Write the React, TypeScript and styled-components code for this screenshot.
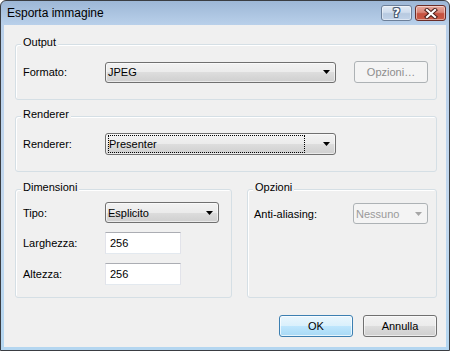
import React from 'react';
import styled, { createGlobalStyle } from 'styled-components';

const GlobalStyle = createGlobalStyle`
  html, body { margin: 0; padding: 0; background: #ffffff; }
  body {
    font-family: "Liberation Sans", Arial, sans-serif;
    font-size: 11px;
    color: #000;
  }
  * { box-sizing: border-box; }
`;

const Window = styled.div`
  width: 450px;
  height: 351px;
  border: 1px solid #3a3d42;
  border-radius: 6px 6px 0 0;
  background: linear-gradient(to bottom, #9db7d6 0px, #b9d0ea 24px, #c3d8ee 60%, #b4d6f0 100%);
  display: flex;
  flex-direction: column;
  overflow: hidden;
`;

const TitleBar = styled.div`
  height: 24px;
  flex: none;
  display: flex;
  align-items: center;
  padding: 0 3px 0 6px;
`;

const Title = styled.span`
  font-family: "Liberation Sans", Arial, sans-serif;
  font-size: 12px;
  color: #000;
`;

const CaptionButtons = styled.div`
  margin-left: auto;
  align-self: flex-start;
  margin-top: 4px;
  display: flex;
  gap: 3px;
`;

const CaptionButton = styled.div<{ $variant: 'help' | 'close' }>`
  width: 31px;
  height: 16px;
  border-radius: 3px;
  border: 1px solid ${(p) => (p.$variant === 'close' ? '#6b2d27' : '#6c7f99')};
  background: ${(p) =>
    p.$variant === 'close'
      ? 'linear-gradient(to bottom, #e6a99e 0%, #d98576 45%, #c5513f 55%, #c95a45 100%)'
      : 'linear-gradient(to bottom, #e2eaf4 0%, #cfdced 45%, #b7c9e0 55%, #c2d3e8 100%)'};
  box-shadow: inset 0 0 0 1px rgba(255, 255, 255, 0.45);
  display: flex;
  align-items: center;
  justify-content: center;
`;

const HelpGlyph = styled.span`
  font-family: "DejaVu Sans", sans-serif;
  font-weight: bold;
  font-size: 12px;
  line-height: 14px;
  color: #ffffff;
  text-shadow: 1px 0 0 #4a5b73, -1px 0 0 #4a5b73, 0 1px 0 #4a5b73, 0 -1px 0 #4a5b73,
    1px 1px 0 #4a5b73, -1px -1px 0 #4a5b73, 1px -1px 0 #4a5b73, -1px 1px 0 #4a5b73;
`;

const Client = styled.div`
  flex: 1;
  margin: 0 3px 3px;
  background: #f0f0f0;
  padding: 19px 9px 0 11px;
  display: flex;
  flex-direction: column;
`;

const GroupBox = styled.div<{ $pad: string; $height?: number; $mt?: number }>`
  position: relative;
  border: 1px solid #d5dfe5;
  border-radius: 3px;
  box-shadow: inset 1px 1px 0 #ffffff;
  padding: ${(p) => p.$pad};
  margin-top: ${(p) => p.$mt ?? 0}px;
  ${(p) => (p.$height ? `height: ${p.$height}px;` : '')}
`;

const Legend = styled.span`
  position: absolute;
  top: -9px;
  left: 5px;
  padding: 0 2px;
  line-height: 13px;
  background: #f0f0f0;
  color: #000;
`;

const Row = styled.div`
  display: flex;
  align-items: center;
`;

const Label = styled.span<{ $width: number }>`
  width: ${(p) => p.$width}px;
  flex: none;
  white-space: nowrap;
`;

const Combo = styled.div<{ $width: number; $height: number; $disabled?: boolean }>`
  width: ${(p) => p.$width}px;
  height: ${(p) => p.$height}px;
  flex: none;
  border: 1px solid ${(p) => (p.$disabled ? '#adb2b5' : '#707070')};
  border-radius: 3px;
  background: ${(p) =>
    p.$disabled
      ? '#f4f4f4'
      : 'linear-gradient(to bottom, #f2f2f2 0%, #ebebeb 50%, #dddddd 50%, #cfcfcf 100%)'};
  box-shadow: ${(p) => (p.$disabled ? 'none' : 'inset 0 0 0 1px rgba(255,255,255,0.55)')};
  color: ${(p) => (p.$disabled ? '#9a9a9a' : '#000')};
  display: flex;
  align-items: center;
  padding: 0 0 0 2px;
`;

const ComboText = styled.span<{ $focused?: boolean }>`
  flex: 1;
  align-self: stretch;
  display: flex;
  align-items: center;
  white-space: nowrap;
  ${(p) =>
    p.$focused
      ? `outline: 1px dotted #000; outline-offset: -1px; margin: 1px 18px 1px 0; padding-left: 1px;`
      : ''}
`;

const Arrow = styled.svg`
  flex: none;
  margin: 0 5px 0 0;
`;

const TextBox = styled.div`
  width: 76px;
  height: 22px;
  background: #ffffff;
  border: 1px solid #e2e3ea;
  border-top-color: #abadb3;
  border-bottom-color: #e3e9ef;
  padding-left: 4px;
  display: flex;
  align-items: center;
`;

const Button = styled.div<{ $kind: 'normal' | 'default' | 'disabled' }>`
  width: 74px;
  height: 22px;
  flex: none;
  border-radius: 3px;
  display: flex;
  align-items: center;
  justify-content: center;
  border: 1px solid
    ${(p) => (p.$kind === 'default' ? '#3c7fb1' : p.$kind === 'disabled' ? '#adb2b5' : '#707070')};
  background: ${(p) =>
    p.$kind === 'default'
      ? 'linear-gradient(to bottom, #eaf6fd 0%, #d9f0fc 50%, #bee6fd 50%, #a7d9f5 100%)'
      : p.$kind === 'disabled'
      ? '#f4f4f4'
      : 'linear-gradient(to bottom, #f2f2f2 0%, #ebebeb 50%, #dddddd 50%, #cfcfcf 100%)'};
  box-shadow: ${(p) =>
    p.$kind === 'disabled'
      ? 'none'
      : p.$kind === 'default'
      ? 'inset 0 0 0 1px rgba(255,255,255,0.7)'
      : 'inset 0 0 0 1px rgba(255,255,255,0.6)'};
  color: ${(p) => (p.$kind === 'disabled' ? '#8d8d8d' : '#000')};
`;

const SideButton = styled(Button)`
  margin-left: 18px;
`;

const BottomGroups = styled.div`
  display: grid;
  grid-template-columns: 217px 190px;
  column-gap: 15px;
  margin-top: 17px;
`;

const FormGrid = styled.div<{ $labelWidth: number }>`
  display: grid;
  grid-template-columns: ${(p) => p.$labelWidth}px auto;
  row-gap: 9px;
  align-items: center;
  justify-items: start;
`;

const Footer = styled.div`
  display: flex;
  justify-content: flex-end;
  gap: 10px;
  margin-top: 17px;
`;

const DropArrow: React.FC<{ color?: string }> = ({ color = '#000' }) => (
  <Arrow width="7" height="4" viewBox="0 0 7 4">
    <path d="M0 0 H7 L3.5 4 Z" fill={color} />
  </Arrow>
);

const CloseGlyph = () => (
  <svg width="14" height="11" viewBox="0 0 14 11">
    <path d="M3 2 L11 9 M11 2 L3 9" stroke="#4a1f1a" strokeWidth="4.2" strokeLinecap="square" fill="none" />
    <path d="M3 2 L11 9 M11 2 L3 9" stroke="#ffffff" strokeWidth="2.2" strokeLinecap="square" fill="none" />
  </svg>
);

export default function App() {
  return (
    <>
      <GlobalStyle />
      <Window>
        <TitleBar>
          <Title>Esporta immagine</Title>
          <CaptionButtons>
            <CaptionButton $variant="help">
              <HelpGlyph>?</HelpGlyph>
            </CaptionButton>
            <CaptionButton $variant="close">
              <CloseGlyph />
            </CaptionButton>
          </CaptionButtons>
        </TitleBar>
        <Client>
          <GroupBox $pad="16px 8px 16px 7px">
            <Legend>Output</Legend>
            <Row>
              <Label $width={82}>Formato:</Label>
              <Combo $width={231} $height={21}>
                <ComboText>JPEG</ComboText>
                <DropArrow />
              </Combo>
              <SideButton $kind="disabled">Opzioni…</SideButton>
            </Row>
          </GroupBox>

          <GroupBox $pad="16px 8px 16px 7px" $mt={16}>
            <Legend>Renderer</Legend>
            <Row>
              <Label $width={82}>Renderer:</Label>
              <Combo $width={231} $height={22}>
                <ComboText $focused>Presenter</ComboText>
                <DropArrow />
              </Combo>
            </Row>
          </GroupBox>

          <BottomGroups>
            <GroupBox $pad="12px 8px 0 7px" $height={109}>
              <Legend>Dimensioni</Legend>
              <FormGrid $labelWidth={82}>
                <Label $width={82}>Tipo:</Label>
                <Combo $width={114} $height={21}>
                  <ComboText>Esplicito</ComboText>
                  <DropArrow />
                </Combo>
                <Label $width={82}>Larghezza:</Label>
                <TextBox>256</TextBox>
                <Label $width={82}>Altezza:</Label>
                <TextBox>256</TextBox>
              </FormGrid>
            </GroupBox>
            <GroupBox $pad="13px 8px 0 6px" $height={109}>
              <Legend>Opzioni</Legend>
              <FormGrid $labelWidth={99}>
                <Label $width={99}>Anti-aliasing:</Label>
                <Combo $width={75} $height={21} $disabled>
                  <ComboText>Nessuno</ComboText>
                  <DropArrow color="#a6a6a6" />
                </Combo>
              </FormGrid>
            </GroupBox>
          </BottomGroups>

          <Footer>
            <Button $kind="default">OK</Button>
            <Button $kind="normal">Annulla</Button>
          </Footer>
        </Client>
      </Window>
    </>
  );
}
